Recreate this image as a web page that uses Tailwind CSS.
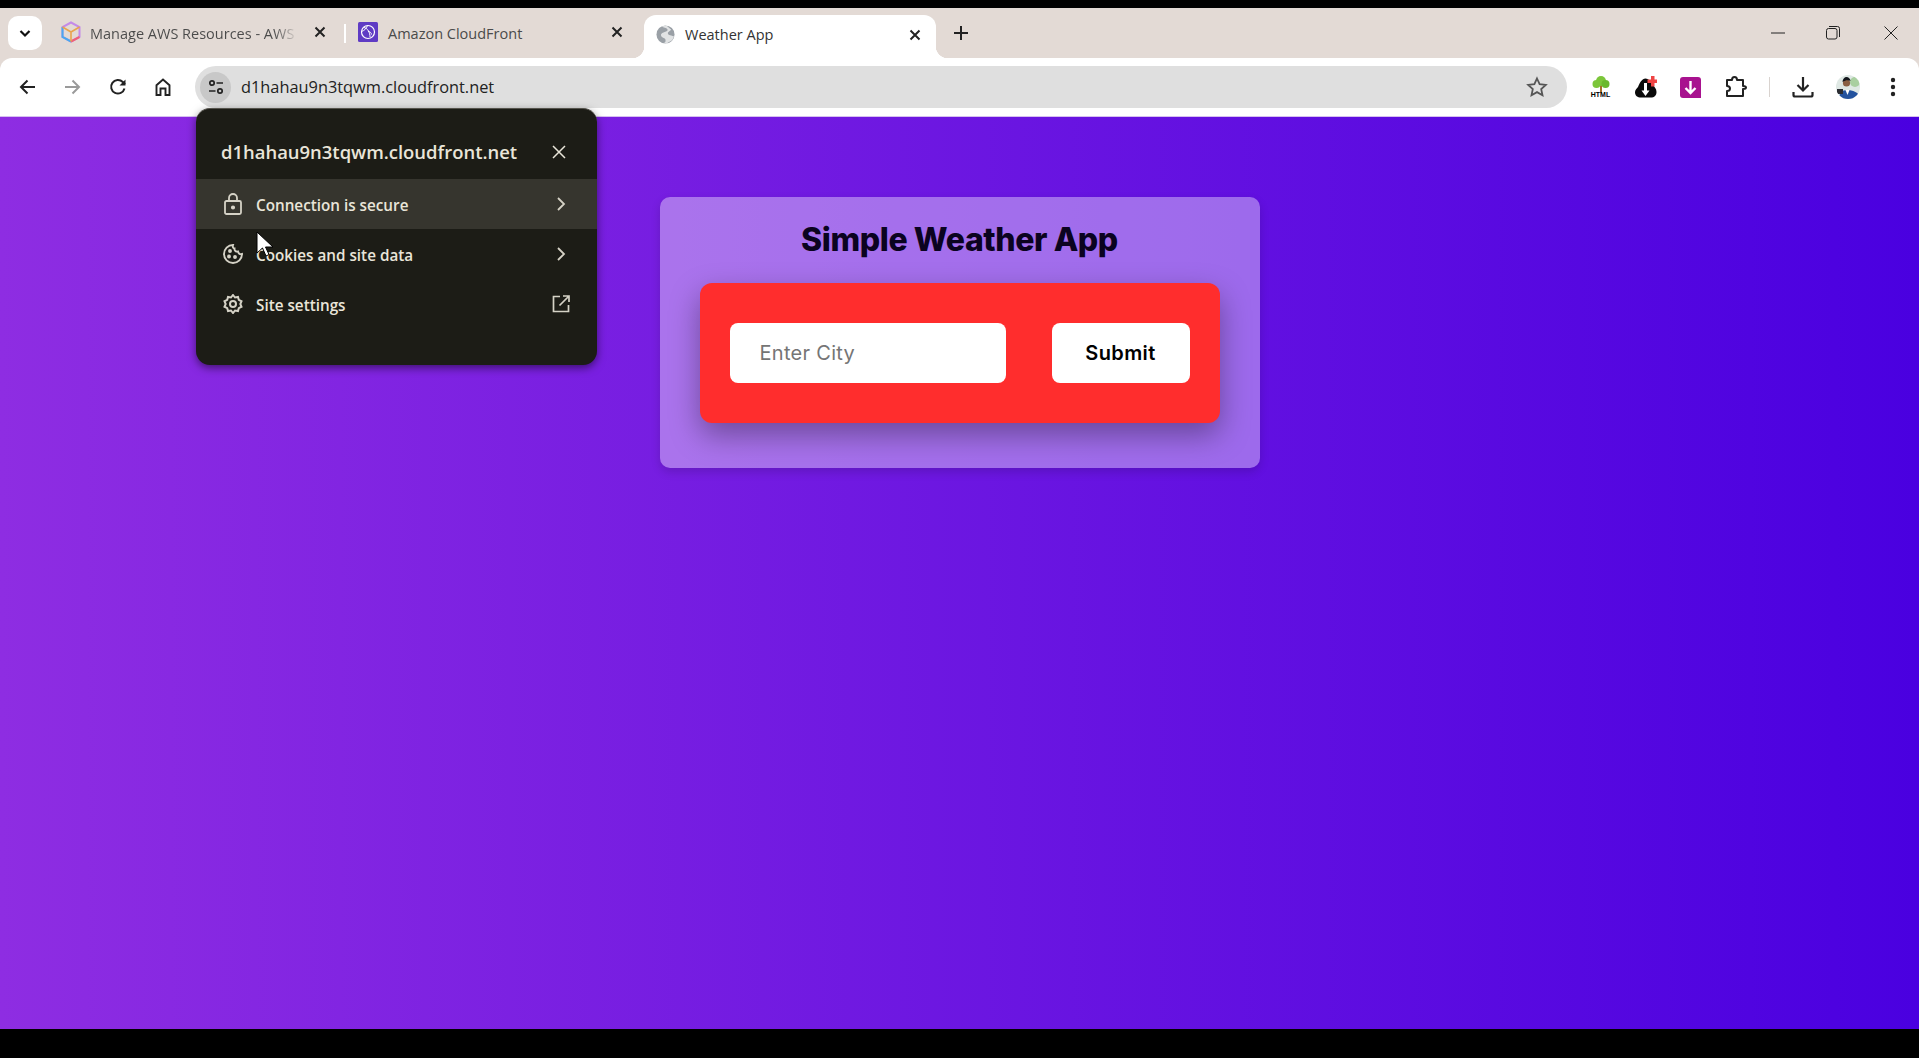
<!DOCTYPE html>
<html lang="en">

<head>
  <meta charset="UTF-8" />
  <meta name="viewport" content="width=device-width, initial-scale=1.0" />
  <title>Weather App</title>
  <script src="https://cdn.jsdelivr.net/npm/@tailwindcss/browser@4"></script>
</head>

<body class="relative h-[1058px] overflow-hidden bg-black pt-[8px] font-['Open_Sans',sans-serif]">

  <!-- Tab strip -->
  <div class="flex h-[50px] items-start bg-[#e3dad5] pl-[8px] text-[#3c3c3c]">
    <button class="mt-[8px] flex h-[34px] w-[34px] items-center justify-center rounded-[10px] bg-white">
      <svg width="14" height="14" viewBox="0 0 14 14" fill="none" stroke="#111" stroke-width="2.2"><path d="M2.5 5 7 9.5 11.500 5" /></svg>
    </button>

    <!-- Tab 1 -->
    <div class="ml-[8px] flex h-[50px] w-[294px] items-center pl-[11px]">
      <svg class="mb-[2px]" width="20" height="22" viewBox="0 0 20 22" fill="none" stroke-width="2">
        <path d="M10 1.500 18.500 6v10L10 20.500 1.500 16V6Z" stroke="#c48ae8" />
        <path d="M1.500 6v10L10 20.500" stroke="#4aa8ee" />
        <path d="M18.500 16 10 20.500" stroke="#f0607a" />
        <path d="M1.500 6 10 11l8.500-5M10 11v9.500" stroke="#e9a34e" stroke-width="1.600" />
      </svg>
      <span class="mt-[1px] ml-[9px] w-[204px] overflow-hidden bg-gradient-to-r from-[#4a4a4a] from-90% to-[#c9c2be] bg-clip-text text-[14.500px] whitespace-nowrap text-transparent">Manage AWS Resources - AWS</span>
      <svg class="mb-[2px] ml-[20px]" width="12" height="12" viewBox="0 0 12 12" stroke="#222" stroke-width="2"><path d="M1.500 1.500l9 9M10.500 1.500l-9 9" /></svg>
    </div>
    <div class="mt-[16px] h-[19px] w-[2px] bg-white"></div>

    <!-- Tab 2 -->
    <div class="flex h-[50px] w-[298px] items-center pl-[12px]">
      <svg class="mb-[2px]" width="20" height="20" viewBox="0 0 20 20" fill="none">
        <rect width="20" height="20" rx="1.500" fill="#5f3bc4" />
        <circle cx="10" cy="10" r="6.500" stroke="#fff" stroke-width="1.200" />
        <path d="M6 5.500c4 1 6 5 6 9.500M9.500 3.500c-1 3-3 5-6 6M10 9.500c2 0 3.500 1.500 3.500 3" stroke="#fff" stroke-width="1" />
      </svg>
      <span class="mt-[1px] ml-[10px] w-[223px] text-[14.500px] whitespace-nowrap text-[#4a4a4a]">Amazon CloudFront</span>
      <svg class="mb-[2px]" width="12" height="12" viewBox="0 0 12 12" stroke="#222" stroke-width="2"><path d="M1.500 1.500l9 9M10.500 1.500l-9 9" /></svg>
    </div>

    <!-- Active tab -->
    <div class="relative mt-[7px] flex h-[43px] w-[292px] items-center rounded-t-[12px] bg-white pb-[4px] pl-[12px]">
      <span class="absolute bottom-0 -left-[12px] h-[12px] w-[12px] bg-[radial-gradient(circle_at_0_0,transparent_12px,white_12.500px)]"></span>
      <span class="absolute -right-[12px] bottom-0 h-[12px] w-[12px] bg-[radial-gradient(circle_at_100%_0,transparent_12px,white_12.500px)]"></span>
      <svg width="19" height="19" viewBox="0 0 20 20">
        <circle cx="10" cy="10" r="9.500" fill="#9aa0a6" />
        <path d="M6 1.500c2 1.500 5 1 6 3s-2 2.500-3.500 3S4.500 9 5.500 11.500s4 1.500 4.500 4-1 3-2 3.500l3 .5 6-3.500 2-4-3-1c-1.500 0-3-.5-3.500-2s2-2.500 3.500-4L11 .5Z" fill="#fff" opacity=".7" />
      </svg>
      <span class="ml-[10px] w-[224px] text-[14.500px] whitespace-nowrap text-[#333]">Weather App</span>
      <svg width="12" height="12" viewBox="0 0 12 12" stroke="#222" stroke-width="2"><path d="M1.500 1.500l9 9M10.500 1.500l-9 9" /></svg>
    </div>
    <svg class="mt-[18px] ml-[18px]" width="14" height="14" viewBox="0 0 14 14" stroke="#222" stroke-width="2"><path d="M7 0v14M0 7h14" /></svg>

    <!-- Window controls -->
    <div class="ml-auto flex h-[50px] items-center pb-[1px]">
      <div class="flex w-[50px] justify-center"><svg width="14" height="14" viewBox="0 0 14 14" stroke="#222" stroke-width="1"><path d="M0 7h14" /></svg></div>
      <div class="flex w-[60px] justify-center"><svg width="14" height="14" viewBox="0 0 14 14" fill="none" stroke="#222" stroke-width="1"><rect x=".500" y="2.500" width="10.500" height="10.500" rx="2" /><path d="M3 .500h8.500a2 2 0 0 1 2 2V11" /></svg></div>
      <div class="flex w-[56px] justify-center"><svg width="14" height="14" viewBox="0 0 14 14" stroke="#222" stroke-width="1"><path d="M.500.500l13 13M13.500.500l-13 13" /></svg></div>
    </div>
  </div>

  <!-- Toolbar -->
  <div class="border-b border-[#d6bff0] bg-[#e3dad5]">
    <div class="flex h-[58px] items-center rounded-t-[12px] bg-white pl-[5px]">
      <div class="flex w-[45px] justify-center"><svg width="20" height="20" viewBox="0 0 20 20" fill="none" stroke="#222" stroke-width="2"><path d="M17 10H3.500M9.500 3.500 3 10l6.500 6.500" /></svg></div>
      <div class="flex w-[45px] justify-center"><svg class="-ml-[2px]" width="20" height="20" viewBox="0 0 20 20" fill="none" stroke="#9a9a9a" stroke-width="2"><path d="M3 10h13.500M10.500 3.500 17 10l-6.500 6.500" /></svg></div>
      <div class="flex w-[45px] justify-center"><svg width="20" height="20" viewBox="0 0 20 20" fill="none" stroke="#222" stroke-width="2"><path d="M16.500 11.500A6.800 6.800 0 1 1 14.800 5L17 7.200" /><path d="M17.500 2.500v6h-6" fill="#222" stroke="none" /></svg></div>
      <div class="flex w-[45px] justify-center"><svg width="20" height="20" viewBox="0 0 20 20" fill="none" stroke="#222" stroke-width="1.900"><path d="M3.500 18V8.300L10 2.500l6.500 5.800V18h-4v-6.500h-5V18Z" /></svg></div>

      <!-- Address bar -->
      <div class="ml-[10px] flex h-[42px] w-[1372px] items-center rounded-full bg-[#dfdfdf] pl-[5px]">
        <div class="flex h-[31px] w-[31px] items-center justify-center rounded-full bg-[#c8c8c8]">
          <svg width="18" height="18" viewBox="0 0 18 18" fill="none" stroke="#222" stroke-width="1.700"><circle cx="5" cy="5" r="2.200" /><path d="M9.500 5H16M2 13h6.500" /><circle cx="13" cy="13" r="2.200" /></svg>
        </div>
        <span class="ml-[10px] pt-[1px] text-[16.350px] text-[#222]">d1hahau9n3tqwm.cloudfront.net</span>
        <svg class="mr-[19px] ml-auto" width="22" height="22" viewBox="0 0 22 22" fill="none" stroke="#555" stroke-width="1.800"><path d="M11 2.500l2.600 5.700 6.200.7-4.600 4.200 1.300 6.100L11 16.100l-5.500 3.100 1.300-6.100L2.200 8.900l6.200-.7Z" /></svg>
      </div>

      <!-- Extensions -->
      <div class="ml-[11px] flex w-[45px] flex-col items-center">
        <svg width="20" height="17" viewBox="0 0 20 17"><rect x="9" y="8" width="2" height="9" fill="#a5702a" /><circle cx="10" cy="5" r="5" fill="#7cc63a" /><circle cx="5.500" cy="8" r="4" fill="#7cc63a" /><circle cx="14.500" cy="8" r="4" fill="#6ab82e" /></svg>
        <span class="-mt-[2px] font-['Liberation_Sans',sans-serif] text-[7px] leading-[7px] font-bold text-black">HTML</span>
      </div>
      <div class="flex w-[45px] justify-center">
        <svg width="22" height="22" viewBox="0 0 22 22">
          <path d="M6 21.500C2.500 21.500 0 19.500 0 16.500c0-2.500 1.500-4 3-5.500C4.500 7 7 2.500 10.500 2.500c3 0 5 3 7 6 2 2.500 4 4 4 7.500s-2 5.500-6 5.500Z" fill="#0a0a0a" />
          <path d="M9 7v7.500H6.500L10.500 20l4-5.500H12V7Z" fill="#fff" />
          <path d="M12.500 3.500H16V0h3.500v3.500H22V7h-2.500v3.500H16V7h-3.500Z" fill="#ee4444" />
        </svg>
      </div>
      <div class="flex w-[45px] justify-center">
        <svg width="21" height="21" viewBox="0 0 21 21" fill="none"><path d="M3 0h15a3 3 0 0 1 3 3v18H3a3 3 0 0 1-3-3V3a3 3 0 0 1 3-3Z" fill="#a8128f" /><path d="M10.500 4v12M5.500 11l5 5 5-5" stroke="#fff" stroke-width="2.400" /></svg>
      </div>
      <div class="flex w-[45px] justify-center">
        <svg width="22" height="22" viewBox="0 0 22 22" fill="none" stroke="#222" stroke-width="2" stroke-linejoin="round"><path d="M2 4h5c0-2 1-3 2.500-3S12 2 12 4h6v6c2 0 3 .5 3 1.500S20 13 18 13v7H2v-5c2 0 3-1 3-2.500S4 10 2 10Z" /></svg>
      </div>
      <div class="ml-[11px] h-[20px] w-[1px] bg-[#d9d3cf]"></div>
      <div class="ml-[10px] flex w-[45px] justify-center">
        <svg width="22" height="22" viewBox="0 0 22 22" fill="none" stroke="#222" stroke-width="2.200"><path d="M11 1v13M5.500 9 11 14.500 16.500 9M1.500 16v3a1.500 1.500 0 0 0 1.500 1.500h16a1.500 1.500 0 0 0 1.500-1.500v-3" /></svg>
      </div>
      <div class="flex w-[45px] justify-center">
        <svg width="24" height="24" viewBox="0 0 24 24">
          <clipPath id="avatar"><circle cx="12" cy="12" r="12" /></clipPath>
          <g clip-path="url(#avatar)">
            <rect width="24" height="24" fill="#dfe8e4" />
            <circle cx="19" cy="7" r="5" fill="#a9cfa0" />
            <path d="M3 24c0-6 3-9 8-9s13 2 13 9Z" fill="#23529e" />
            <path d="M9.500 15l2 5 2-5Z" fill="#fff" />
            <circle cx="10.500" cy="8" r="3.600" fill="#8a6044" />
            <path d="M6.500 7c0-3 2-5 4-5s4 2 4 4c-2-1-5-1-8 1Z" fill="#14161c" />
            <rect x="1" y="14" width="6" height="5" fill="#2b2d33" />
          </g>
        </svg>
      </div>
      <div class="flex w-[45px] justify-center">
        <svg width="6" height="20" viewBox="0 0 6 20" fill="#222"><circle cx="3" cy="3" r="2.200" /><circle cx="3" cy="10" r="2.200" /><circle cx="3" cy="17" r="2.200" /></svg>
      </div>
    </div>
  </div>

  <!-- Page -->
  <main class="flex h-[912px] justify-center bg-[linear-gradient(to_right,#8e2de2,#4a00e0)] pt-[80px]">
    <div class="h-[271px] w-[600px] rounded-[10px] bg-white/38 px-[40px] shadow-[0_4px_10px_rgba(0,0,0,0.15)]">
      <h1 class="mt-[22px] text-center font-['Inter',sans-serif] text-[32px] leading-[42px] font-extrabold tracking-[-0.4px] text-[#0b0320]">Simple Weather App</h1>
      <div class="mt-[22px] flex h-[140px] items-center justify-between rounded-[12px] bg-[#ff2d2d] px-[30px] shadow-[0_12px_30px_rgba(0,0,0,0.35)]">
        <input placeholder="Enter City" class="h-[60px] w-[276px] rounded-[8px] bg-white px-[30px] font-['Inter',sans-serif] text-[20px] tracking-[0.3px] text-black outline-none placeholder:text-[#757575]" />
        <button class="h-[60px] w-[138px] rounded-[8px] bg-white font-['Inter',sans-serif] text-[20px] font-semibold tracking-[0.4px] text-black">Submit</button>
      </div>
    </div>
  </main>

  <!-- Site info popup -->
  <div class="absolute top-[108px] left-[196px] h-[257px] w-[401px] rounded-[14px] border-t border-[#55534c] bg-[#1c1c16] text-[#e9e5d9] shadow-[0_3px_8px_rgba(0,0,0,0.5)]">
    <div class="flex h-[70px] items-center justify-between pt-[16px] pr-[31px] pl-[25px]">
      <span class="text-[18.450px] font-semibold">d1hahau9n3tqwm.cloudfront.net</span>
      <svg width="14" height="14" viewBox="0 0 14 14" stroke="#e9e5d9" stroke-width="1.500"><path d="M1 1l12 12M13 1 1 13" /></svg>
    </div>
    <div class="flex h-[50px] items-center bg-[#36352e] pr-[31px] pl-[28px]">
      <svg width="18" height="22" viewBox="0 0 18 22" fill="none" stroke="#d5d2c6" stroke-width="1.800"><rect x="1" y="8" width="16" height="13" rx="1.500" /><path d="M5 8V5a4 4 0 0 1 8 0v3" /><circle cx="9" cy="14.500" r="1.200" fill="#d5d2c6" /></svg>
      <span class="ml-[14px] pt-[2px] text-[15.250px] font-semibold">Connection is secure</span>
      <svg class="ml-auto" width="10" height="14" viewBox="0 0 10 14" fill="none" stroke="#d5d2c6" stroke-width="1.800"><path d="M2 1l6 6-6 6" /></svg>
    </div>
    <div class="flex h-[50px] items-center pr-[31px] pl-[27px]">
      <svg width="20" height="20" viewBox="0 0 20 20" fill="none" stroke="#d5d2c6" stroke-width="1.900"><path d="M10 1a9 9 0 1 0 9 9c-2 .5-3.500-.5-4-2.500-2 .5-3.800-1-3.500-3C10 4.500 9.500 2.500 10 1Z" /><circle cx="7" cy="7" r="1" fill="#d5d2c6" /><circle cx="6" cy="12.500" r="1" fill="#d5d2c6" /><circle cx="12" cy="13" r="1" fill="#d5d2c6" /></svg>
      <span class="ml-[13px] pt-[2px] text-[15.250px] font-semibold">Cookies and site data</span>
      <svg class="ml-auto" width="10" height="14" viewBox="0 0 10 14" fill="none" stroke="#d5d2c6" stroke-width="1.800"><path d="M2 1l6 6-6 6" /></svg>
    </div>
    <div class="flex h-[50px] items-center pr-[27px] pl-[27px]">
      <svg width="20" height="20" viewBox="0 0 20 20" fill="none" stroke="#d5d2c6" stroke-width="2"><path d="M10 1l2 2.500 3-.6.800 3 2.700 1.400L17.300 10l1.200 2.700-2.700 1.400-.8 3-3-.6L10 19l-2-2.500-3 .6-.8-3-2.700-1.400L2.700 10 1.500 7.300l2.700-1.400.8-3 3 .6Z" /><circle cx="10" cy="10" r="3" /></svg>
      <span class="ml-[13px] pt-[2px] text-[15.250px] font-semibold">Site settings</span>
      <svg class="ml-auto" width="18" height="18" viewBox="0 0 18 18" fill="none" stroke="#d5d2c6" stroke-width="1.700"><path d="M8 1.500H1.500v15h15V10M11 1h6v6M17 1 7.500 10.500" /></svg>
    </div>
  </div>

  <!-- Mouse cursor -->
  <svg class="absolute top-[231px] left-[256px]" width="18" height="28" viewBox="0 0 18 28"><path d="M1 1v21l5.500-5 3.500 8 3-1.500-3.500-7.500H17Z" fill="#fff" stroke="#000" stroke-width="1" /></svg>

</body>

</html>
